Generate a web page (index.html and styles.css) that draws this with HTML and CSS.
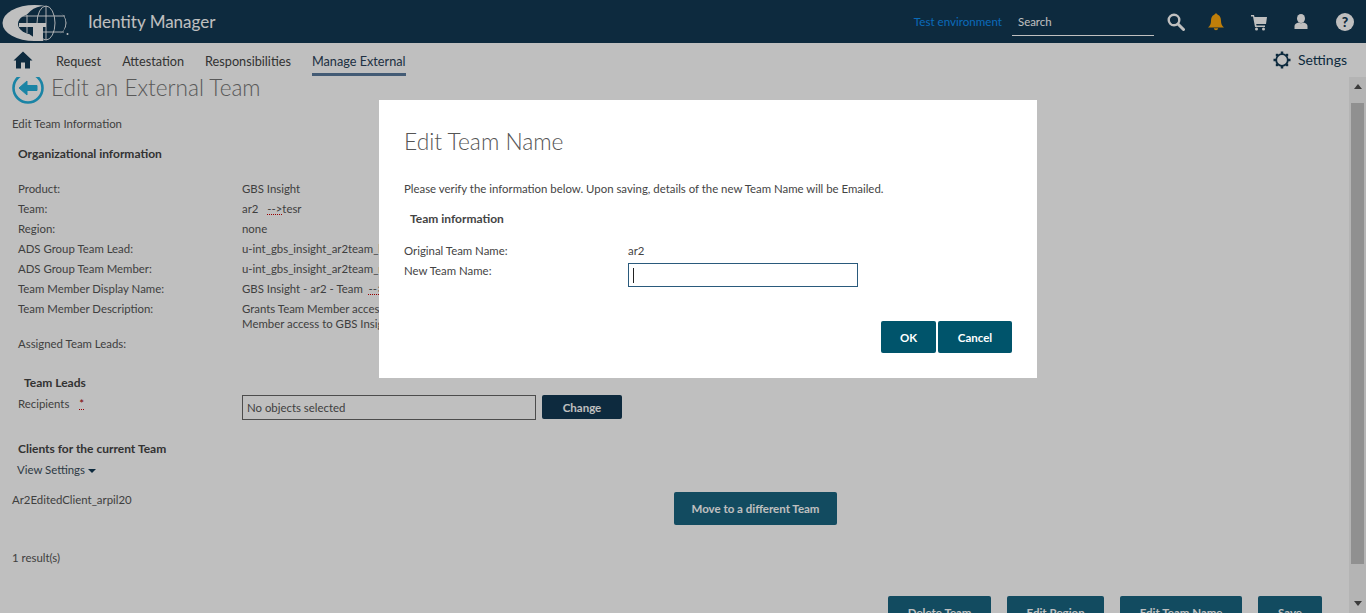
FILE: index.html
```html
<!DOCTYPE html>
<html lang="en">
<head>
  <meta charset="UTF-8">
  <title>Identity Manager</title>
  <link rel="stylesheet" href="styles.css">
</head>
<body>
<header class="topbar">
  <svg class="logo" viewBox="0 0 70 44" width="70" height="44">
    <ellipse cx="34.500" cy="23" rx="32" ry="18" fill="#fff"/>
    <ellipse cx="45" cy="23" rx="20.500" ry="17" fill="#123853"/>
    <ellipse cx="34" cy="24" rx="16" ry="10.500" fill="#123853"/>
    <g fill="none" stroke="#fff" stroke-width=".9">
      <ellipse cx="46" cy="23" rx="9" ry="17"/>
      <path d="M20 16h45M36 32h28M46 6v34M27 15v18"/>
    </g>
    <path d="M19 23h27v4h-3v14h-10v-14h-14z" fill="#fff"/>
    <circle cx="67.500" cy="34" r="1" fill="#fff"/>
  </svg>
  <span class="app-name">Identity Manager</span>
  <span class="env">Test environment</span>
  <div class="search">Search</div>
  <div class="top-icons">
    <svg viewBox="0 0 18 18" width="18" height="18"><circle cx="7" cy="7" r="5.300" fill="none" stroke="#fff" stroke-width="2.400"/><path d="M11 11l5.500 5.500" stroke="#fff" stroke-width="3" stroke-linecap="round"/></svg>
    <svg viewBox="0 0 18 18" width="18" height="18"><path d="M9 .5c1 0 1.500.6 1.600 1.300C13 2.500 14 5 14 8c0 3 1 5 3 6.500H1C3 13 4 11 4 8c0-3 1-5.500 3.400-6.200C7.500 1.100 8 .5 9 .5zM6.800 15.300h4.400C11 16.500 10 17.200 9 17.200s-2-.7-2.200-1.900z" fill="#ffa90d"/></svg>
    <svg class="ic-cart" viewBox="0 0 18 18" width="18" height="18"><path d="M1 2h3l.5 2H17l-1 7H6.200l.3 1.500H15V14H5L3 3.500H1z" fill="#fff"/><circle cx="6.500" cy="16" r="1.500" fill="#fff"/><circle cx="13.500" cy="16" r="1.500" fill="#fff"/></svg>
    <svg class="ic-user" viewBox="0 0 18 18" width="18" height="18"><ellipse cx="9" cy="5.500" rx="4" ry="4.500" fill="#fff"/><path d="M2.500 16v-3c0-2 2-3 4-3.500 1.500 1 3.500 1 5 0 2 .5 4 1.500 4 3.500v3z" fill="#fff"/></svg>
    <span class="help">?</span>
  </div>
</header>

<nav class="mainnav">
  <svg class="home" viewBox="0 0 20 18" width="20" height="18"><path d="M10 .5l9.500 9h-2.500v8h-5v-6h-4v6h-5v-8H.500z" fill="#123853"/></svg>
  <a>Request</a>
  <a>Attestation</a>
  <a>Responsibilities</a>
  <a class="active">Manage External</a>
  <span class="settings">
    <svg viewBox="0 0 18 18" width="18" height="18"><circle cx="9" cy="9" r="5.800" fill="none" stroke="#123853" stroke-width="1.800"/><g fill="#123853"><rect x="7.750" y="0.500" width="2.500" height="2.500"/><rect x="7.750" y="15" width="2.500" height="2.500"/><rect x="0.500" y="7.750" width="2.500" height="2.500"/><rect x="15" y="7.750" width="2.500" height="2.500"/><rect x="2.800" y="2.800" width="2.500" height="2.500"/><rect x="12.700" y="2.800" width="2.500" height="2.500"/><rect x="2.800" y="12.700" width="2.500" height="2.500"/><rect x="12.700" y="12.700" width="2.500" height="2.500"/></g></svg>
    Settings
  </span>
</nav>

<div class="page">
  <main class="content">
    <div class="title-row">
      <svg viewBox="0 0 32 32" width="32" height="32"><circle cx="16" cy="16" r="14.500" fill="none" stroke="#23b0dc" stroke-width="2.600"/><path d="M7 16l8-7v4.500h10v5H15v4.500z" fill="#23b0dc" stroke="#23b0dc" stroke-linejoin="round"/></svg>
      <h1>Edit an External Team</h1>
    </div>
    <p class="crumb">Edit Team Information</p>
    <h3 class="section">Organizational information</h3>
    <div class="info-grid">
      <span>Product:</span><span>GBS Insight</span>
      <span>Team:</span><span>ar2 &nbsp;<u class="spell team-arrow">--&gt;</u>tesr</span>
      <span>Region:</span><span>none</span>
      <span>ADS Group Team Lead:</span><span>u-int_gbs_insight_ar2team_lead</span>
      <span>ADS Group Team Member:</span><span>u-int_gbs_insight_ar2team_member</span>
      <span>Team Member Display Name:</span><span>GBS Insight - ar2 - Team &nbsp;<u class="spell">--&gt;</u></span>
      <span>Team Member Description:</span><span class="desc">Grants Team Member access to GBS Insight<br>Member access to GBS Insight</span>
      <span>Assigned Team Leads:</span><span></span>
    </div>
    <h3 class="section leads">Team Leads</h3>
    <div class="recipients">
      <span class="rec-label">Recipients &nbsp;<u class="spell req">*</u></span>
      <div class="picker">No objects selected</div>
      <button class="btn btn-dark">Change</button>
    </div>
    <h3 class="section clients">Clients for the current Team</h3>
    <div class="view-settings">View Settings <i class="caret"></i></div>
    <div class="client-row">
      <span>Ar2EditedClient_arpil20</span>
      <button class="btn btn-teal move">Move to a different Team</button>
    </div>
    <p class="results">1 result(s)</p>
    <div class="actions">
      <button class="btn btn-teal">Delete Team</button>
      <button class="btn btn-teal">Edit Region</button>
      <button class="btn btn-teal">Edit Team Name</button>
      <button class="btn btn-teal save">Save</button>
    </div>
  </main>
  <div class="scrollbar">
    <i class="arrow-up"></i>
    <div class="thumb"></div>
    <i class="arrow-down"></i>
  </div>
</div>

<div class="overlay">
  <div class="modal">
    <h2>Edit Team Name</h2>
    <p class="note">Please verify the information below. Upon saving, details of the new Team Name will be Emailed.</p>
    <h3>Team information</h3>
    <div class="modal-grid">
      <span>Original Team Name:</span><span>ar2</span>
      <span>New Team Name:</span><div class="name-input"><i class="text-caret"></i></div>
    </div>
    <div class="modal-btns">
      <button class="btn btn-modal ok">OK</button>
      <button class="btn btn-modal cancel">Cancel</button>
    </div>
  </div>
</div>
</body>
</html>
```

FILE: styles.css
```css
* { box-sizing: border-box; }
html, body { height: 100%; }
body { margin: 0; overflow: hidden; background: #fff; color: #555;
  font-family: Lato, "Open Sans", sans-serif; font-size: 11.4px; line-height: 16px;
  display: flex; flex-direction: column; }
h1, h2, h3, p { margin: 0; }
h3 { font-size: 12px; font-weight: bold; color: #444; }

.topbar { height: 43px; flex: none; background: #123853; display: flex; align-items: center; color: #fff; }
.logo { flex: none; }
.app-name { margin-left: 18px; font-size: 17px; }
.env { margin-left: auto; color: #0e8ff5; font-size: 11.6px; }
.search { width: 142px; height: 28px; margin: 1px 0 0 10px; padding: 6px 6px 0; border-bottom: 1px solid #fff; }
.top-icons { display: flex; align-items: center; gap: 22px; margin: 0 12px 0 13px; }
.ic-cart { margin-left: 3px; }
.ic-user { margin-left: 2px; }
.help { margin-left: 4px; width: 18px; height: 18px; border-radius: 50%; background: #fff; color: #123853;
  font-weight: 900; font-size: 14px; line-height: 18px; text-align: center; }

.mainnav { height: 34px; flex: none; display: flex; align-items: center; padding-left: 13px; font-size: 12.7px; color: #444; }
.mainnav a { height: 32px; padding-top: 9px; margin-right: 21px; }
.mainnav .home { margin-right: 23px; }
.mainnav a.active { color: #2a4158; border-bottom: 3px solid #5a7a9c; }
.settings { margin-left: auto; margin-right: 19px; display: flex; align-items: center; gap: 7px; font-size: 14px; color: #123853; }

.page { flex: 1; min-height: 0; display: flex; }
.content { flex: 1; min-width: 0; overflow: hidden; padding-left: 12px; }
.scrollbar { width: 17px; flex: none; background: #f1f1f1; display: flex; flex-direction: column; align-items: center; }
.thumb { width: 13px; height: 461px; margin-top: 14px; background: #c1c1c1; }
.arrow-up { margin-top: 7px; border: 4px solid transparent; border-top: 0; border-bottom: 5px solid #505050; }
.arrow-down { margin-top: 37px; border: 4px solid transparent; border-bottom: 0; border-top: 5px solid #505050; }

.title-row { display: flex; align-items: center; gap: 7px; height: 32px; margin-top: -5px; }
.title-row svg { flex: none; }
h1 { font-size: 22.6px; font-weight: 300; line-height: 32px; color: #777; }
.crumb { margin-top: 12px; }
.section { margin: 14px 0 0 6px; }
.info-grid { margin: 17px 0 0 6px; display: grid; grid-template-columns: 224px 1fr; grid-template-rows: repeat(6, 20px) 35px 20px; line-height: 20px; white-space: nowrap; }
.info-grid .desc { line-height: 15px; padding-top: 2px; }
.spell { text-decoration: underline dotted #c00; }
.team-arrow { margin-left: 3px; }
.req { color: #a00; margin-left: 4px; }
.section.leads { margin: 21px 0 0 12px; }
.recipients { display: flex; margin: 4px 0 0 6px; }
.rec-label { width: 224px; padding-top: 1px; }
.picker { width: 294px; height: 25px; padding: 4px 4px 0; border: 1px solid #666; }
.btn { border: 0; border-radius: 2px; color: #fff; font-family: inherit; font-size: 11.5px; font-weight: bold; padding: 0; white-space: nowrap; }
.btn-dark { width: 80px; height: 24px; margin-left: 6px; background: #123853; }
.btn-teal { height: 33px; padding: 0 19.500px; background: #186480; }
.btn-teal.save { min-width: 64px; }
.section.clients { margin: 21px 0 0 6px; }
.view-settings { margin: 5px 0 0 5px; color: #3d4f5c; }
.caret { display: inline-block; margin: 0 0 1px; border: 4px solid transparent; border-bottom: 0; border-top: 4px solid #123853; }
.client-row { display: grid; grid-template-columns: 662px auto; justify-content: start; margin-top: 14px; }
.move { width: 163px; padding: 0; }
.results { margin-top: 25px; }
.actions { display: flex; justify-content: flex-end; gap: 16px; margin: 30px 27px 0 0; }

.overlay { position: fixed; inset: 0; background: rgba(0,0,0,.25); }
.modal { position: absolute; left: 379px; top: 100px; width: 658px; height: 278px; padding: 28px 25px 0; background: #fff; color: #444; }
.modal h2 { font-size: 22.8px; font-weight: 300; line-height: 26px; color: #555; }
.note { margin-top: 27px; }
.modal h3 { margin: 14px 0 0 6px; }
.modal-grid { margin-top: 14px; display: grid; grid-template-columns: 224px 230px; grid-template-rows: 20px 26px; line-height: 20px; }
.name-input { height: 24px; padding: 4px; border: 1px solid #2a5a7c; margin-top: 2px; }
.text-caret { display: block; width: 1px; height: 15px; background: #222; }
.modal-btns { display: flex; justify-content: flex-end; gap: 2px; margin-top: 34px; }
.btn-modal { height: 32px; background: #00546b; }
.btn-modal.ok { width: 55px; }
.btn-modal.cancel { width: 74px; }
```
